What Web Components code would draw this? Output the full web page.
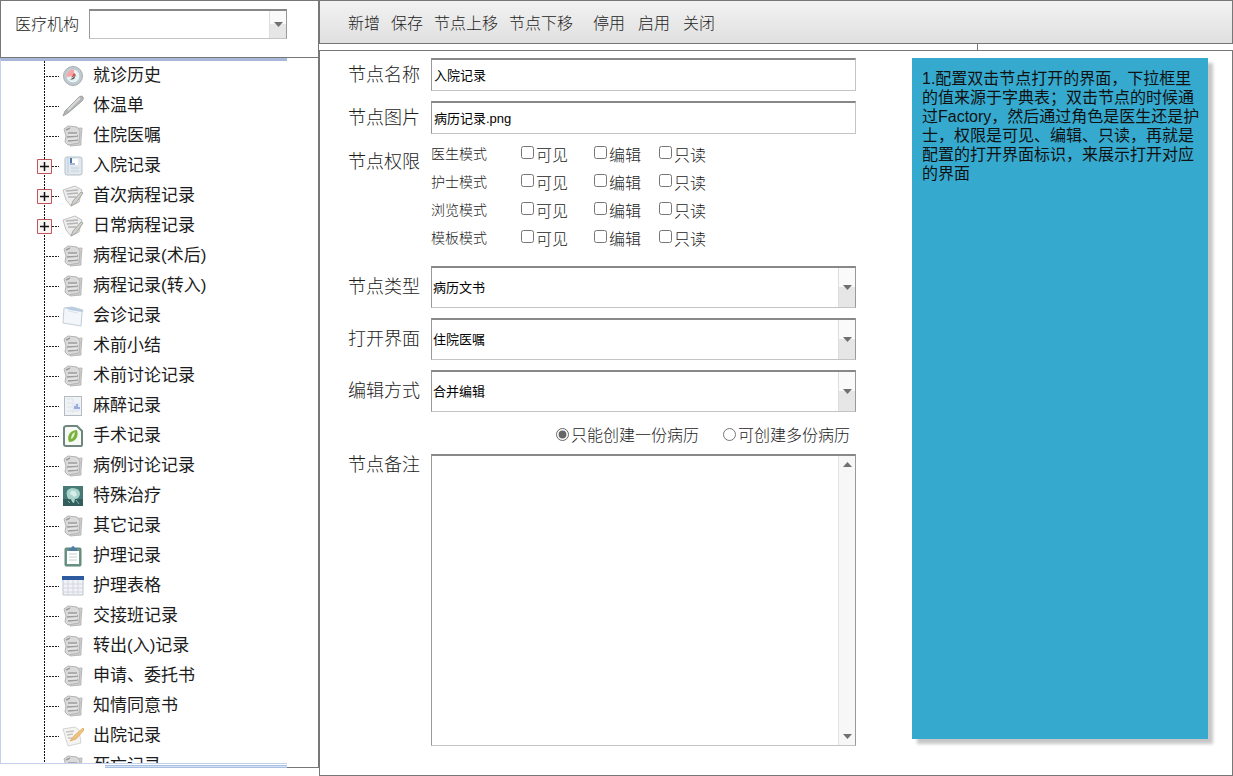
<!DOCTYPE html>
<html lang="zh-CN">
<head>
<meta charset="utf-8">
<title>病历节点配置</title>
<style>
  body { margin: 0; background: #fff; color: #1c1c1c; font: 16px/20px "Liberation Sans", "Noto Sans CJK SC", sans-serif; }
</style>
</head>
<body>
<app-shell>
  <org-filter slot="side"></org-filter>
  <node-tree slot="side">
    <tree-item icon="gauge">就诊历史</tree-item>
    <tree-item icon="pen">体温单</tree-item>
    <tree-item icon="doc">住院医嘱</tree-item>
    <tree-item icon="card" branch>入院记录</tree-item>
    <tree-item icon="write" branch>首次病程记录</tree-item>
    <tree-item icon="write" branch>日常病程记录</tree-item>
    <tree-item icon="doc">病程记录(术后)</tree-item>
    <tree-item icon="doc">病程记录(转入)</tree-item>
    <tree-item icon="sheet">会诊记录</tree-item>
    <tree-item icon="doc">术前小结</tree-item>
    <tree-item icon="doc">术前讨论记录</tree-item>
    <tree-item icon="chart">麻醉记录</tree-item>
    <tree-item icon="leaf">手术记录</tree-item>
    <tree-item icon="doc">病例讨论记录</tree-item>
    <tree-item icon="scan">特殊治疗</tree-item>
    <tree-item icon="doc">其它记录</tree-item>
    <tree-item icon="clip">护理记录</tree-item>
    <tree-item icon="table">护理表格</tree-item>
    <tree-item icon="doc">交接班记录</tree-item>
    <tree-item icon="doc">转出(入)记录</tree-item>
    <tree-item icon="doc">申请、委托书</tree-item>
    <tree-item icon="doc">知情同意书</tree-item>
    <tree-item icon="edit">出院记录</tree-item>
    <tree-item icon="doc">死亡记录</tree-item>
  </node-tree>
  <tool-bar slot="main"></tool-bar>
  <node-editor slot="main">
    <form-row label="节点名称" kind="text" value="入院记录"></form-row>
    <form-row label="节点图片" kind="text" value="病历记录.png"></form-row>
    <permission-grid label="节点权限" modes="医生模式 护士模式 浏览模式 模板模式"></permission-grid>
    <form-row label="节点类型" kind="select" value="病历文书"></form-row>
    <form-row label="打开界面" kind="select" value="住院医嘱"></form-row>
    <form-row label="编辑方式" kind="select" value="合并编辑"></form-row>
    <copy-choice></copy-choice>
    <form-row label="节点备注" kind="area"></form-row>
    <note-card slot="note">1.配置双击节点打开的界面，下拉框里的值来源于字典表；双击节点的时候通过Factory，然后通过角色是医生还是护士，权限是可见、编辑、只读，再就是配置的打开界面标识，来展示打开对应的界面</note-card>
  </node-editor>
</app-shell>

<script>
const base = `
  :host, * { box-sizing: border-box; }
  input, select, textarea, button { font: inherit; color: inherit; margin: 0; border-radius: 0; }
`;
const fieldCss = `
  .field { border: 1px solid #c4c4c4; border-top: 2px solid #888; border-left-color: #999; background: #fff; color: #000;
           font-size: 13px; width: 100%; padding: 0 2px; display: block; outline: none; }
  input.field { padding-bottom: 2px; }
  .pick { position: relative; display: block; flex: 1; min-width: 0; }
  .pick select { appearance: none; height: 100%; padding: 0 18px 0 1px; }
  .arrow { position: absolute; right: 1px; top: 2px; bottom: 1px; width: 17px; display: flex; align-items: center; justify-content: center;
           pointer-events: none; border-left: 1px solid #ddd; background: linear-gradient(#fafafa 0 50%, #e6e6e6 50%); }
  .pick .field { border-right-color: #999; }
`;
const down = `<svg width="9" height="5" viewBox="0 0 9 5"><path d="M0 0h9L4.5 5z" fill="#707070"/></svg>`;
const up = `<svg width="9" height="5" viewBox="0 0 9 5"><path d="M0 5h9L4.5 0z" fill="#707070"/></svg>`;

function define(name, render) {
  customElements.define(name, class extends HTMLElement {
    constructor() { super(); this.attachShadow({ mode: "open" }); }
    connectedCallback() { this.shadowRoot.innerHTML = render(this); }
  });
}

define("app-shell", () => `
  <style>${base}
    :host { display: grid; grid-template-columns: 319px minmax(0, 1fr); height: 100vh; min-height: 600px; }
    .side, .main { display: flex; flex-direction: column; min-height: 0; min-width: 0; }
    .side { padding-bottom: 8px; }
  </style>
  <div class="side"><slot name="side"></slot></div>
  <main class="main"><slot name="main"></slot></main>`);

define("org-filter", () => `
  <style>${base}${fieldCss}
    :host { display: flex; align-items: flex-start; gap: 10px; flex: none; height: 58px; padding: 8px 31px 0 14px; border: 1px solid #777; font-weight: 300; }
    label { line-height: 32px; }
    .pick { height: 30px; }
  </style>
  <label for="org">医疗机构</label>
  <span class="pick"><select class="field" id="org"><option></option></select><span class="arrow">${down}</span></span>`);

define("node-tree", () => `
  <style>${base}
    :host { display: flex; flex-direction: column; flex: 1 1 0; min-height: 0; border-right: 1px solid #777; }
    .body { flex: 1 1 0; min-height: 0; width: 287px; overflow-y: auto; scrollbar-width: none;
            border: solid #c3d1ea; border-width: 3px 0 1px 1px; border-top-color: #a9b8d8; padding-left: 36px; }
    .foot { display: flex; height: 4px; }
    .bar { width: 182px; margin-left: 105px; background: linear-gradient(#fff 1px, #a9c0e2 1px 2px, #d4e2f6 2px 3px, #a9c0e2 3px); }
    .rest { flex: 1; border-bottom: 1px solid #777; }
  </style>
  <div class="body" role="tree"><slot></slot></div>
  <div class="foot"><span class="bar"></span><span class="rest"></span></div>`);

const icons = {
  gauge: `<circle cx="11" cy="11" r="9.5" fill="#c3cbd1" stroke="#a4adb3"/><circle cx="11" cy="11" r="7" fill="#e9f3f5" stroke="#b9c6cd"/><path d="M12 11L4.5 12A7 7 0 0 1 12 4.500z" fill="#f6a6a6"/><path d="M9 13l3-5 2 2z" fill="#d8484e"/><path d="M8 15l6-5-2 4z" fill="#4f6650"/>`,
  pen: `<path d="M1 21l2-5L17 2q3-2 4 0 1 2-1 4L6 18z" fill="#b3b5b4" stroke="#a0a3a2"/><path d="M6 15L18 3" stroke="#d9dbda" stroke-width="2"/>`,
  doc: `<path d="M6 4l14-1-1 12 0 5-11 1z" fill="#d0d0d0" stroke="#b8b8b8"/><path d="M2 4l4-3 9 1 3 4-1 12-11 2-3-3 1-6z" fill="#dadada" stroke="#b4b4b4"/><path d="M4 5l4-2M6 8h9M5 12l11-1M6 16l10-1" stroke="#9e9e9e" stroke-width="1.500"/><path d="M7 10h8M6 14h9" stroke="#f0f0f0"/>`,
  card: `<rect x="3" y="2" width="17" height="18" rx="2" fill="#e1e8ee" stroke="#b3c0cb"/><path d="M5 3h2v15H5z" fill="#cdd9e4"/><path d="M9 4h7v6H9z" fill="#fff"/><path d="M9 3v5" stroke="#4a74a8" stroke-width="2"/><path d="M8 9h5" stroke="#4a74a8"/><path d="M9 13h8M9 16h8" stroke="#c6d1db"/>`,
  write: `<path d="M1 5l12-4 7 4-3 12-8 4-5-6z" fill="#ececec" stroke="#c2c2c2"/><path d="M4 6l12-1M5 9l11-1M6 12h8" stroke="#b4b4b4" stroke-width="1.500"/><path d="M21 8l-7 10-5 3 2-5 8-9z" fill="#cfd2cd" stroke="#a4a6a2"/>`,
  sheet: `<path d="M2 3l8-1 11 3-1 3-1 13-18-3z" fill="#f3f7fb" stroke="#c3cdd6"/><path d="M3 3l7-1 10 3v2L8 5z" fill="#b8cbe0"/><path d="M6 6l10 2" stroke="#dbe5ee"/>`,
  chart: `<rect x="2.500" y="1.500" width="17" height="19" fill="#f0f3f5" stroke="#b4bcc2"/><path d="M5 4h6M5 8h5M5 12h5M5 16h12M11 4v14" stroke="#dbe3e8" stroke-width="1"/><path d="M12 8h6v8h-6z" fill="#e3e9f6"/><path d="M13 14v-3M15 14v-5M17 14v-2" stroke="#7f9bd4" stroke-width="1.500"/>`,
  leaf: `<path d="M5 1h10l5 5v14q0 1-1 1H4q-2 0-2-2V3q0-2 3-2z" fill="#f7fbf5" stroke="#6f857f" stroke-width="2"/><path d="M7 17C4 10 9 5 15 5c2 6-1 12-8 12z" fill="#79b23f"/><path d="M9 14q0-5 4-7-1 6-4 7z" fill="#e8f3d3"/>`,
  scan: `<rect x="1" y="1" width="20" height="20" fill="#477a74"/><path d="M1 14h20v7H1z" fill="#345e5b"/><path d="M5 11q-2-7 5-8 8 0 8 6-1 5-5 5l-1 4q-2 0-3-4-3 1-4-3z" fill="#a9d4cb"/><path d="M8 9q0-4 5-3l2 4-3 2-2-2z" fill="#d9eee9"/><path d="M14 15l3 4M6 16l2 2" stroke="#8ab7b0"/>`,
  clip: `<rect x="3" y="3" width="16" height="18" rx="1" fill="#6b9484" stroke="#5f8878"/><path d="M5 6h12v13H5z" fill="#fff"/><path d="M7 9h8M7 12h8M7 15h8" stroke="#c4d3d0"/><path d="M7 6V3h2q2-4 4 0h2v3z" fill="#507ca5"/>`,
  table: `<path d="M1 2h20v18H1z" fill="#f1f3f7" stroke="#bcc4cf"/><path d="M0 1h22v4H0z" fill="#2c5b9f"/><path d="M1 9h20M1 13h20M1 17h20M6 5v15M11 5v15M16 5v15" stroke="#d3d8e0"/>`,
  edit: `<path d="M1 4l12-2 4 3 2 13-13 3z" fill="#f5f4f1" stroke="#d4d4d4"/><path d="M4 7l8-1M5 10l6-1M6 13h5" stroke="#c4c4c4" stroke-width="1.500"/><path d="M21 3l-9 8-4 5 6-2 8-9z" fill="#f0c27f" stroke="#e2b06c"/>`
};

define("tree-item", el => {
  const open = el.hasAttribute("branch");
  return `
  <style>${base}
    :host { display: flex; align-items: center; height: 30px; font-size: 17px; line-height: 30px; white-space: nowrap; }
    svg { flex: none; display: block; }
    .icon { margin: 0 9px 0 2px; }
  </style>
  <svg width="23" height="30" viewBox="0 0 23 30" fill="none">
    <path d="M7.500 0v30" stroke="#111" stroke-dasharray="2 1"/>
    <path d="M9 15.500h13" stroke="#222" stroke-dasharray="2 1"/>
    ${open ? `<path d="M.500 8.500h14v14H.500z" fill="#faf4f4" stroke="#c2545c"/><path d="M3 15.500h9M7.500 11v9" stroke="#111" stroke-width="1.500"/>` : ""}
  </svg>
  <svg class="icon" width="22" height="22" viewBox="0 0 22 22" fill="none">${icons[el.getAttribute("icon")]}</svg>
  <span role="treeitem"><slot></slot></span>`;
});

define("tool-bar", () => `
  <style>${base}
    :host { display: block; flex: none; font-weight: 300; }
    nav { display: flex; align-items: center; height: 44px; padding: 3px 0 0 28px; border: 1px solid #777; background: linear-gradient(#f2f2f2, #e0e0e0); }
    .group { display: flex; gap: 11px; }
    .group + .group { margin-left: 20px; gap: 13px; }
    button { border: 0; padding: 0; background: none; white-space: nowrap; }
    .link { height: 6px; margin-left: 72%; border-left: 1px solid #777; }
  </style>
  <nav>
    <div class="group"><button>新增</button><button>保存</button><button>节点上移</button><button>节点下移</button></div>
    <div class="group"><button>停用</button><button>启用</button><button>关闭</button></div>
  </nav>
  <div class="link"></div>`);

define("node-editor", () => `
  <style>${base}
    :host { display: flex; flex: 1; min-height: 0; gap: 56px; padding: 7px 24px 29px 28px; border: 1px solid #777; }
    form { flex: 1; min-width: 0; display: flex; flex-direction: column; }
    aside { flex: none; width: 296px; display: flex; margin-bottom: 7px; }
  </style>
  <form><slot></slot></form>
  <aside><slot name="note"></slot></aside>`);

define("form-row", el => {
  const kind = el.getAttribute("kind"), value = el.getAttribute("value") || "";
  const control = {
    text: `<input class="field" id="c" type="text" value="${value}">`,
    select: `<span class="pick"><select class="field" id="c"><option>${value}</option></select><span class="arrow">${down}</span></span>`,
    area: `<div class="area field"><textarea id="c"></textarea><span class="scroll">${up}${down}</span></div>`
  }[kind];
  return `
  <style>${base}${fieldCss}
    :host { display: grid; grid-template-columns: 72px minmax(0, 1fr); column-gap: 11px; align-items: center; flex: none; margin-bottom: 10px; height: 33px; }
    :host([kind=select]) { height: 42px; }
    :host([kind=area]) { flex: 1; height: auto; min-height: 0; margin: 0; align-items: stretch; }
    label { font-size: 18px; line-height: 22px; font-weight: 300; white-space: nowrap; }
    input.field, .pick { height: 100%; }
    .area { display: flex; padding: 0; min-height: 0; border-right-color: #999; }
    textarea { flex: 1; min-width: 0; border: 0; padding: 2px; resize: none; outline: none; background: none; }
    .scroll { width: 17px; display: flex; flex-direction: column; justify-content: space-between; align-items: center; padding: 6px 0; background: #f7f7f7; border-left: 1px solid #e2e2e2; }
  </style>
  <label for="c">${el.getAttribute("label")}</label>${control}`;
});

define("permission-grid", el => `
  <style>${base}
    :host { display: grid; grid-template-columns: 72px minmax(0, 1fr); column-gap: 11px; flex: none; margin: -4px 0 14px; font-weight: 300; }
    .title { font-size: 18px; line-height: 22px; padding-top: 11px; white-space: nowrap; }
    .row { display: grid; grid-template-columns: 90px 73px 65px 1fr; align-items: center; height: 28px; white-space: nowrap; }
    .mode { font-size: 14px; }
    label { display: flex; align-items: flex-start; padding-top: 4px; }
    input { width: 13px; height: 13px; margin: 0 2px 0 0; }
  </style>
  <span class="title">${el.getAttribute("label")}</span>
  <div>${el.getAttribute("modes").split(" ").map(m => `
    <div class="row" role="group" aria-label="${m}"><span class="mode">${m}</span>
      ${["可见", "编辑", "只读"].map(t => `<label><input type="checkbox">${t}</label>`).join("")}
    </div>`).join("")}</div>`);

define("copy-choice", () => `
  <style>${base}
    :host { display: flex; flex: none; justify-content: flex-end; gap: 24px; height: 42px; margin-top: -10px; padding: 6px 6px 0 0; font-weight: 300; white-space: nowrap; }
    label { display: flex; align-items: center; }
    input { width: 13px; height: 13px; margin: 0 2px 4px 0; accent-color: #666; }
  </style>
  <label><input type="radio" name="copies" checked>只能创建一份病历</label>
  <label><input type="radio" name="copies">可创建多份病历</label>`);

define("note-card", () => `
  <style>${base}
    :host { display: block; flex: 1; padding: 11px 8px 11px 10px; line-height: 19px; color: #111; background: #36a9ce; box-shadow: 5px 5px 3px rgba(0, 0, 0, .22); }
  </style>
  <slot></slot>`);
</script>
</body>
</html>
